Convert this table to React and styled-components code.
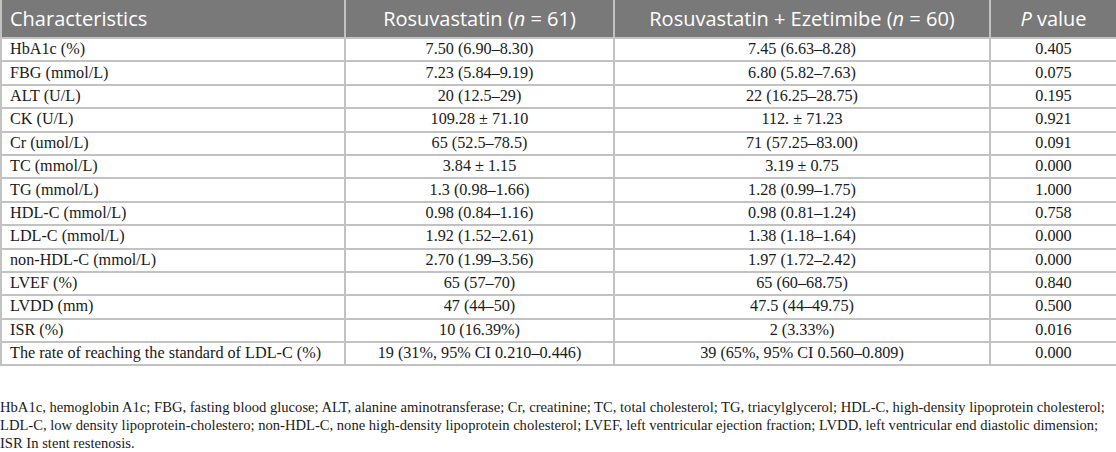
import React from 'react';
import styled, { createGlobalStyle } from 'styled-components';

const Global = createGlobalStyle`
  html, body { margin: 0; padding: 0; background: #ffffff; }
  body { width: 1116px; }
`;

const rows = [
  ['HbA1c (%)', '7.50 (6.90–8.30)', '7.45 (6.63–8.28)', '0.405'],
  ['FBG (mmol/L)', '7.23 (5.84–9.19)', '6.80 (5.82–7.63)', '0.075'],
  ['ALT (U/L)', '20 (12.5–29)', '22 (16.25–28.75)', '0.195'],
  ['CK (U/L)', '109.28 ± 71.10', '112. ± 71.23', '0.921'],
  ['Cr (umol/L)', '65 (52.5–78.5)', '71 (57.25–83.00)', '0.091'],
  ['TC (mmol/L)', '3.84 ± 1.15', '3.19 ± 0.75', '0.000'],
  ['TG (mmol/L)', '1.3 (0.98–1.66)', '1.28 (0.99–1.75)', '1.000'],
  ['HDL-C (mmol/L)', '0.98 (0.84–1.16)', '0.98 (0.81–1.24)', '0.758'],
  ['LDL-C (mmol/L)', '1.92 (1.52–2.61)', '1.38 (1.18–1.64)', '0.000'],
  ['non-HDL-C (mmol/L)', '2.70 (1.99–3.56)', '1.97 (1.72–2.42)', '0.000'],
  ['LVEF (%)', '65 (57–70)', '65 (60–68.75)', '0.840'],
  ['LVDD (mm)', '47 (44–50)', '47.5 (44–49.75)', '0.500'],
  ['ISR (%)', '10 (16.39%)', '2 (3.33%)', '0.016'],
  ['The rate of reaching the standard of LDL-C (%)', '19 (31%, 95% CI 0.210–0.446)', '39 (65%, 95% CI 0.560–0.809)', '0.000'],
];

const notes = [
  'HbA1c, hemoglobin A1c; FBG, fasting blood glucose; ALT, alanine aminotransferase; Cr, creatinine; TC, total cholesterol; TG, triacylglycerol; HDL-C, high-density lipoprotein cholesterol;',
  'LDL-C, low density lipoprotein-cholestero; non-HDL-C, none high-density lipoprotein cholesterol; LVEF, left ventricular ejection fraction; LVDD, left ventricular end diastolic dimension;',
  'ISR In stent restenosis.',
];

const Wrap = styled.div`
  width: 1116px;
`;

const Table = styled.table`
  width: 1116px;
  border-collapse: collapse;
  table-layout: fixed;
`;

const HeadCell = styled.th`
  background: #797979;
  color: #ffffff;
  font-family: "Open Sans", sans-serif;
  font-weight: 400;
  font-size: 20px;
  height: 37px;
  padding: 0 8px;
  text-align: ${p => (p.$left ? 'left' : 'center')};
  border: 2px solid #c2c2c2;
  border-top: none;
  white-space: nowrap;
`;

const Cell = styled.td`
  font-family: "Liberation Serif", "Times New Roman", serif;
  font-size: 16.2px;
  color: #1a1a1a;
  height: 23.4px;
  padding: 0 8px;
  text-align: ${p => (p.$left ? 'left' : 'center')};
  border: 2px solid #c2c2c2;
  white-space: nowrap;
  box-sizing: border-box;
`;

const Notes = styled.div`
  padding-top: 32px;
  font-family: "Liberation Serif", "Times New Roman", serif;
  font-size: 14.6px;
  line-height: 18px;
  color: #1a1a1a;
`;

const NoteLine = styled.div`
  white-space: nowrap;
`;

export default function App() {
  return (
    <Wrap>
      <Global />
      <Table>
        <colgroup>
          <col style={{ width: 344 }} />
          <col style={{ width: 269 }} />
          <col style={{ width: 376 }} />
          <col style={{ width: 127 }} />
        </colgroup>
        <thead>
          <tr>
            <HeadCell $left>Characteristics</HeadCell>
            <HeadCell>Rosuvastatin (<i>n</i> = 61)</HeadCell>
            <HeadCell>Rosuvastatin + Ezetimibe (<i>n</i> = 60)</HeadCell>
            <HeadCell><i>P</i> value</HeadCell>
          </tr>
        </thead>
        <tbody>
          {rows.map(r => (
            <tr key={r[0]}>
              <Cell $left>{r[0]}</Cell>
              <Cell>{r[1]}</Cell>
              <Cell>{r[2]}</Cell>
              <Cell>{r[3]}</Cell>
            </tr>
          ))}
        </tbody>
      </Table>
      <Notes>
        {notes.map(n => (
          <NoteLine key={n}>{n}</NoteLine>
        ))}
      </Notes>
    </Wrap>
  );
}
